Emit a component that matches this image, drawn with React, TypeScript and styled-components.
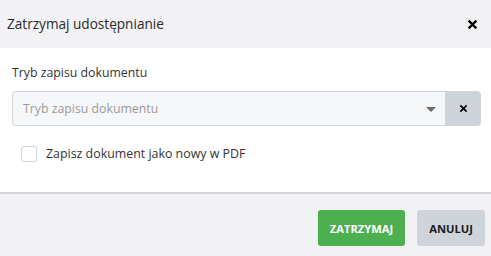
import styled, { createGlobalStyle } from "styled-components";

const GlobalStyle = createGlobalStyle`
  html, body {
    margin: 0;
    padding: 0;
    background: #ffffff;
    font-family: "Open Sans", "Noto Sans", sans-serif;
  }
`;

const App = () => {
  return (
    <Dialog>
      <GlobalStyle />
      <Header>
        <Title>Zatrzymaj udostępnianie</Title>
        <CloseIcon viewBox="0 0 10 10">
          <path d="M1.5 1.5 L8.5 8.5 M8.5 1.5 L1.5 8.5" />
        </CloseIcon>
      </Header>

      <Body>
        <Label>Tryb zapisu dokumentu</Label>
        <SelectRow>
          <Select>
            <Placeholder>Tryb zapisu dokumentu</Placeholder>
            <Caret viewBox="0 0 10 6">
              <path d="M0 0 L10 0 L5 5 Z" />
            </Caret>
          </Select>
          <ClearButton>
            <SmallX viewBox="0 0 10 10">
              <path d="M1.5 1.5 L8.5 8.5 M8.5 1.5 L1.5 8.5" />
            </SmallX>
          </ClearButton>
        </SelectRow>
        <CheckRow>
          <Box />
          <CheckText>Zapisz dokument jako nowy w PDF</CheckText>
        </CheckRow>
      </Body>

      <Footer>
        <Button bg="#4caf50" clr="#ffffff">ZATRZYMAJ</Button>
        <Button bg="#cfd3da" clr="#1c1c1c">ANULUJ</Button>
      </Footer>
    </Dialog>
  );
};

export default App;

const Dialog = styled.div`
  width: 491px;
  height: 256px;
  display: flex;
  flex-direction: column;
  background: #ffffff;
`;

const Header = styled.div`
  height: 48px;
  background: #f2f2f4;
  display: flex;
  align-items: center;
  justify-content: space-between;
  padding: 0 13px 0 7px;
`;

const Title = styled.div`
  font-size: 13.6px;
  color: #2b2b2b;
  margin-top: -2px;
`;

const CloseIcon = styled.svg`
  width: 11px;
  height: 11px;
  stroke: #000;
  stroke-width: 2;
  fill: none;
`;

const Body = styled.div`
  height: 144px;
  padding: 16px 10px 0 12px;
  box-sizing: border-box;
  display: flex;
  flex-direction: column;
`;

const Label = styled.div`
  font-size: 12.3px;
  color: #333;
  line-height: 18px;
`;

const SelectRow = styled.div`
  margin-top: 9px;
  display: flex;
  height: 35px;
  width: 469px;
  border-radius: 4px;
  overflow: hidden;
`;

const Select = styled.div`
  flex: 1;
  background: #f6f7f9;
  border: 1px solid #cfd3da;
  border-right: none;
  border-radius: 4px 0 0 4px;
  display: flex;
  align-items: center;
  justify-content: space-between;
  padding: 0 9px 0 10px;
`;

const Placeholder = styled.span`
  font-size: 12.3px;
  color: #9a9a9a;
`;

const Caret = styled.svg`
  width: 10px;
  height: 6px;
  fill: #6b6b6b;
  margin-top: 2px;
`;

const ClearButton = styled.div`
  width: 36px;
  background: #cfd3da;
  display: flex;
  align-items: center;
  justify-content: center;
`;

const SmallX = styled.svg`
  width: 9px;
  height: 9px;
  stroke: #000;
  stroke-width: 2;
  fill: none;
`;

const CheckRow = styled.div`
  display: flex;
  align-items: center;
  margin-top: 19px;
  padding-left: 9px;
`;

const Box = styled.div`
  width: 14px;
  height: 14px;
  border: 1px solid #cfd3da;
  border-radius: 3px;
  background: #fff;
`;

const CheckText = styled.span`
  font-size: 12.4px;
  color: #333;
  margin-left: 9px;
`;

const Footer = styled.div`
  flex: 1;
  background: #f2f2f4;
  border-top: 2px solid #d6d6d8;
  display: flex;
  justify-content: flex-end;
  align-items: flex-start;
  padding: 16px 6px 0 0;
  gap: 12px;
`;

const Button = styled.div<{ bg: string; clr: string }>`
  height: 36px;
  padding: 0 12px;
  display: flex;
  align-items: center;
  background: ${(p) => p.bg};
  color: ${(p) => p.clr};
  border-radius: 3px;
  font-size: 11.2px;
  font-weight: 700;
`;
